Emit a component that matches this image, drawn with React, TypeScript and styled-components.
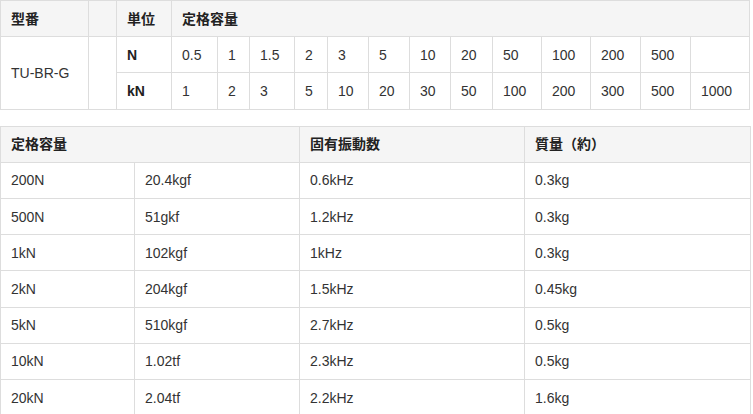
import React from "react";
import styled, { createGlobalStyle } from "styled-components";

const Global = createGlobalStyle`
  html, body { margin: 0; padding: 0; background: #fff; }
  body {
    font-family: "Liberation Sans", Arial, "Noto Sans CJK JP", sans-serif;
    font-size: 14px;
    color: #333;
  }
`;

const Page = styled.div`
  width: 750px;
  display: flex;
  flex-direction: column;
  gap: 16px;
`;

const Table = styled.table`
  width: 750px;
  border-collapse: collapse;
  table-layout: fixed;
`;

const Th = styled.th`
  background: #f5f5f5;
  border: 1px solid #dddddd;
  padding: 8.5px 10px;
  line-height: 18.2px;
  font-weight: bold;
  text-align: left;
  color: #222;
  white-space: nowrap;
`;

const Td = styled.td<{ $bold?: boolean }>`
  border: 1px solid #dddddd;
  padding: 8.5px 10px;
  line-height: 18.2px;
  font-weight: ${(p) => (p.$bold ? "bold" : "normal")};
  color: ${(p) => (p.$bold ? "#222" : "#333")};
  text-align: left;
  white-space: nowrap;
  vertical-align: middle;
`;

const widths1 = [88, 28, 55, 46, 32, 45, 33, 41, 41, 41, 42, 49, 49, 50, 50, 59];
const nVals = ["0.5", "1", "1.5", "2", "3", "5", "10", "20", "50", "100", "200", "500", ""];
const kVals = ["1", "2", "3", "5", "10", "20", "30", "50", "100", "200", "300", "500", "1000"];

const rows2 = [
  ["200N", "20.4kgf", "0.6kHz", "0.3kg"],
  ["500N", "51gkf", "1.2kHz", "0.3kg"],
  ["1kN", "102kgf", "1kHz", "0.3kg"],
  ["2kN", "204kgf", "1.5kHz", "0.45kg"],
  ["5kN", "510kgf", "2.7kHz", "0.5kg"],
  ["10kN", "1.02tf", "2.3kHz", "0.5kg"],
  ["20kN", "2.04tf", "2.2kHz", "1.6kg"],
];
const widths2 = [134, 165, 225, 226];

export default function App() {
  return (
    <>
      <Global />
      <Page>
        <Table>
          <colgroup>
            {widths1.map((w, i) => (
              <col key={i} style={{ width: w }} />
            ))}
          </colgroup>
          <thead>
            <tr>
              <Th>型番</Th>
              <Th></Th>
              <Th>単位</Th>
              <Th colSpan={13}>定格容量</Th>
            </tr>
          </thead>
          <tbody>
            <tr>
              <Td rowSpan={2}>TU-BR-G</Td>
              <Td rowSpan={2}></Td>
              <Td $bold>N</Td>
              {nVals.map((v, i) => (
                <Td key={i}>{v}</Td>
              ))}
            </tr>
            <tr>
              <Td $bold>kN</Td>
              {kVals.map((v, i) => (
                <Td key={i}>{v}</Td>
              ))}
            </tr>
          </tbody>
        </Table>
        <Table>
          <colgroup>
            {widths2.map((w, i) => (
              <col key={i} style={{ width: w }} />
            ))}
          </colgroup>
          <thead>
            <tr>
              <Th colSpan={2}>定格容量</Th>
              <Th>固有振動数</Th>
              <Th>質量（約）</Th>
            </tr>
          </thead>
          <tbody>
            {rows2.map((r, i) => (
              <tr key={i}>
                {r.map((c, j) => (
                  <Td key={j}>{c}</Td>
                ))}
              </tr>
            ))}
          </tbody>
        </Table>
      </Page>
    </>
  );
}
